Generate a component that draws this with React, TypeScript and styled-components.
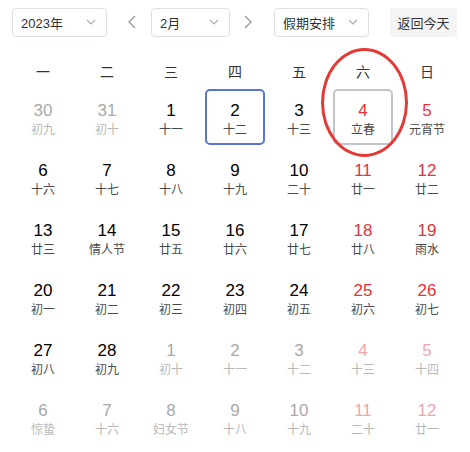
import React from "react";
import styled, { createGlobalStyle } from "styled-components";

const Global = createGlobalStyle`
  html, body { margin: 0; padding: 0; background: #fff; }
  body { font-family: "Liberation Sans", "Noto Sans CJK SC", Arial, sans-serif; }
`;

const Page = styled.div`
  position: relative;
  width: 470px;
  height: 452px;
  box-sizing: border-box;
  padding: 8px 11px 0 11px;
`;

const Toolbar = styled.div`
  display: flex;
  align-items: center;
  height: 28px;
  padding-left: 1px;
`;

const Select = styled.div<{ $w: number; $ml?: number }>`
  width: ${(p) => p.$w}px;
  margin-left: ${(p) => p.$ml ?? 0}px;
  height: 29px;
  box-sizing: border-box;
  border: 1px solid #dcdfe6;
  border-radius: 4px;
  display: flex;
  align-items: center;
  justify-content: space-between;
  padding: 0 9px 0 8px;
  font-size: 13px;
  color: #333;
`;

const ArrowBtn = styled.div<{ $ml: number }>`
  width: 24px;
  height: 28px;
  margin-left: ${(p) => p.$ml}px;
  display: flex;
  align-items: center;
  justify-content: center;
`;

const TodayBtn = styled.div`
  margin-left: 21px;
  width: 67px;
  height: 29px;
  border-radius: 4px;
  background: #f4f4f5;
  display: flex;
  align-items: center;
  justify-content: center;
  font-size: 13px;
  color: #333;
`;

const Grid = styled.div`
  margin-top: 19px;
  width: 448px;
  display: grid;
  grid-template-columns: repeat(7, 64px);
`;

const Weekday = styled.div`
  height: 32px;
  display: flex;
  align-items: center;
  justify-content: center;
  font-size: 14px;
  color: #333;
`;

const Cell = styled.div`
  height: 60px;
  display: flex;
  align-items: center;
  justify-content: center;
`;

const Box = styled.div<{ $mode: "none" | "selected" | "today" }>`
  width: 60px;
  height: 56px;
  box-sizing: border-box;
  padding-top: 3px;
  border-radius: 5px;
  border: 2px solid
    ${(p) =>
      p.$mode === "selected" ? "#5a74d0" : p.$mode === "today" ? "#c0c4cc" : "transparent"};
  display: flex;
  flex-direction: column;
  align-items: center;
  justify-content: center;
`;

const Num = styled.div<{ $color: string }>`
  font-size: 17px;
  line-height: 22px;
  color: ${(p) => p.$color};
`;

const Lunar = styled.div<{ $color: string }>`
  font-size: 12px;
  line-height: 16px;
  color: ${(p) => p.$color};
  white-space: nowrap;
`;

const Ring = styled.div`
  position: absolute;
  left: 321px;
  top: 48px;
  width: 87px;
  height: 109px;
  box-sizing: border-box;
  border: 3px solid #e53935;
  border-radius: 50%;
  pointer-events: none;
`;

const Chevron = () => (
  <svg width="12" height="12" viewBox="0 0 12 12">
    <path d="M2 4 L6 8 L10 4" fill="none" stroke="#a8abb2" strokeWidth="1.2" />
  </svg>
);

const Arrow = ({ dir }: { dir: "l" | "r" }) => (
  <svg width="10" height="16" viewBox="0 0 10 16">
    <path
      d={dir === "l" ? "M8 2 L2 8 L8 14" : "M2 2 L8 8 L2 14"}
      fill="none"
      stroke="#9a9a9a"
      strokeWidth="1.4"
    />
  </svg>
);

type Day = { n: number; l: string; o?: boolean; m?: "selected" | "today" };

const rows: Day[][] = [
  [
    { n: 30, l: "初九", o: true },
    { n: 31, l: "初十", o: true },
    { n: 1, l: "十一" },
    { n: 2, l: "十二", m: "selected" },
    { n: 3, l: "十三" },
    { n: 4, l: "立春", m: "today" },
    { n: 5, l: "元宵节" },
  ],
  [
    { n: 6, l: "十六" },
    { n: 7, l: "十七" },
    { n: 8, l: "十八" },
    { n: 9, l: "十九" },
    { n: 10, l: "二十" },
    { n: 11, l: "廿一" },
    { n: 12, l: "廿二" },
  ],
  [
    { n: 13, l: "廿三" },
    { n: 14, l: "情人节" },
    { n: 15, l: "廿五" },
    { n: 16, l: "廿六" },
    { n: 17, l: "廿七" },
    { n: 18, l: "廿八" },
    { n: 19, l: "雨水" },
  ],
  [
    { n: 20, l: "初一" },
    { n: 21, l: "初二" },
    { n: 22, l: "初三" },
    { n: 23, l: "初四" },
    { n: 24, l: "初五" },
    { n: 25, l: "初六" },
    { n: 26, l: "初七" },
  ],
  [
    { n: 27, l: "初八" },
    { n: 28, l: "初九" },
    { n: 1, l: "初十", o: true },
    { n: 2, l: "十一", o: true },
    { n: 3, l: "十二", o: true },
    { n: 4, l: "十三", o: true },
    { n: 5, l: "十四", o: true },
  ],
  [
    { n: 6, l: "惊蛰", o: true },
    { n: 7, l: "十六", o: true },
    { n: 8, l: "妇女节", o: true },
    { n: 9, l: "十八", o: true },
    { n: 10, l: "十九", o: true },
    { n: 11, l: "二十", o: true },
    { n: 12, l: "廿一", o: true },
  ],
];

const weekdays = ["一", "二", "三", "四", "五", "六", "日"];

export default function App() {
  return (
    <Page>
      <Global />
      <Toolbar>
        <Select $w={95}>
          <span>2023年</span>
          <Chevron />
        </Select>
        <ArrowBtn $ml={13}>
          <Arrow dir="l" />
        </ArrowBtn>
        <Select $w={79} $ml={7}>
          <span>2月</span>
          <Chevron />
        </Select>
        <ArrowBtn $ml={6}>
          <Arrow dir="r" />
        </ArrowBtn>
        <Select $w={95} $ml={14}>
          <span>假期安排</span>
          <Chevron />
        </Select>
        <TodayBtn>返回今天</TodayBtn>
      </Toolbar>
      <Grid>
        {weekdays.map((w) => (
          <Weekday key={w}>{w}</Weekday>
        ))}
        {rows.flatMap((r, ri) =>
          r.map((d, ci) => {
            const weekend = ci >= 5;
            const numColor = d.o
              ? weekend
                ? "#f2a5ac"
                : "#a8a8a8"
              : weekend
              ? "#e5323c"
              : "#000";
            const lunarColor = d.o ? "#b8b8b8" : "#4a4a4a";
            return (
              <Cell key={`${ri}-${ci}`}>
                <Box $mode={d.m ?? "none"}>
                  <Num $color={numColor}>{d.n}</Num>
                  <Lunar $color={lunarColor}>{d.l}</Lunar>
                </Box>
              </Cell>
            );
          })
        )}
      </Grid>
      <Ring />
    </Page>
  );
}
